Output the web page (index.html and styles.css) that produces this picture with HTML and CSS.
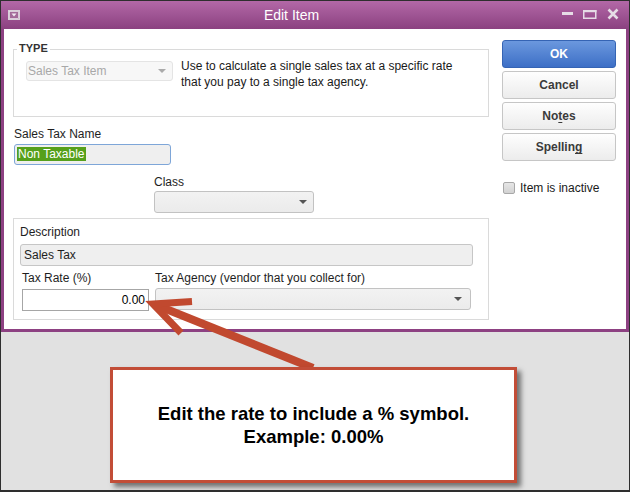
FILE: index.html
```html
<!DOCTYPE html>
<html>
<head>
<meta charset="utf-8">
<link rel="stylesheet" href="styles.css">
</head>
<body>
<div class="screen">
  <div class="window">
    <div class="titlebar">
      <div class="tb-left">
        <svg class="sysicon" width="12" height="10" viewBox="0 0 12 10">
          <rect x="0.5" y="0.5" width="11" height="9" fill="#a36a99" stroke="#d8d0d8"/>
          <rect x="1.5" y="1.5" width="9" height="7" fill="none" stroke="#e8e0e8" stroke-width="0.8"/>
          <polygon points="3.5,3.5 8.5,3.5 6,6.5" fill="#f2eaf2"/>
        </svg>
      </div>
      <div class="tb-title">Edit Item</div>
      <div class="tb-controls">
        <svg width="74" height="28" viewBox="0 0 74 28">
          <rect x="7" y="11" width="11" height="3" fill="#e6dce6"/>
          <rect x="28.75" y="9.75" width="12" height="7.5" fill="none" stroke="#e6dce6" stroke-width="1.5"/>
          <rect x="28" y="9" width="13.5" height="2.2" fill="#e6dce6"/>
          <path d="M53.5 8.5 L62.5 17.5 M62.5 8.5 L53.5 17.5" stroke="#e6dce6" stroke-width="2.6"/>
        </svg>
      </div>
    </div>
    <div class="body">
      <div class="main">
        <div class="group type-group">
          <div class="legend">TYPE</div>
          <div class="type-row">
            <div class="select type-select"><span>Sales Tax Item</span><span class="caret caret-light"></span></div>
            <p class="type-desc">Use to calculate a single sales tax at a specific rate<br>that you pay to a single tax agency.</p>
          </div>
        </div>
        <div class="label name-label">Sales Tax Name</div>
        <div class="name-input"><span class="sel">Non Taxable</span></div>
        <div class="class-field">
          <div class="label">Class</div>
          <div class="select class-select"><span></span><span class="caret"></span></div>
        </div>
        <div class="group detail-group">
          <div class="label">Description</div>
          <div class="desc-input">Sales Tax</div>
          <div class="rate-row">
            <div class="rate-col">
              <div class="label">Tax Rate (%)</div>
              <div class="rate-input">0.00</div>
            </div>
            <div class="agency-col">
              <div class="label">Tax Agency (vendor that you collect for)</div>
              <div class="select agency-select"><span></span><span class="caret"></span></div>
            </div>
          </div>
        </div>
      </div>
      <div class="side">
        <div class="btn btn-ok">OK</div>
        <div class="btn">Cancel</div>
        <div class="btn">No<u>t</u>es</div>
        <div class="btn">Spellin<u>g</u></div>
        <div class="check"><span class="box"></span><span>Item is inactive</span></div>
      </div>
    </div>
  </div>
  <svg class="arrow" width="630" height="492" viewBox="0 0 630 492">
    <path d="M156 305 L313 368" stroke="#c1492f" stroke-width="8" fill="none"/>
    <path d="M192 301.5 L153 304 L181 333" stroke="#c1492f" stroke-width="7" fill="none" stroke-linejoin="miter" stroke-miterlimit="10"/>
  </svg>
  <div class="callout">Edit the rate to include a % symbol.<br>Example: 0.00%</div>
</div>
</body>
</html>
```
FILE: styles.css
```css
body {
  margin: 0;
  font-family: "Liberation Sans", Arial, sans-serif;
  font-size: 12px;
  color: #1e1e1e;
}

.screen {
  position: relative;
  width: 630px;
  height: 492px;
  box-sizing: border-box;
  border: 1px solid #2e2e2e;
  border-bottom-width: 2px;
  background: #e1e1e1;
  overflow: hidden;
}

.window {
  width: 628px;
}

.titlebar {
  display: flex;
  align-items: center;
  height: 28px;
  background: linear-gradient(#b368a7, #8b4180);
}

.tb-left {
  width: 27px;
  box-sizing: border-box;
  padding-left: 7px;
  display: flex;
}

.sysicon {
  display: block;
}

.tb-title {
  flex: 1;
  text-align: center;
  color: #fff;
  font-size: 14px;
}

.tb-controls {
  width: 74px;
  display: flex;
}

.tb-controls svg {
  display: block;
}

.body {
  display: flex;
  gap: 13px;
  height: 300px;
  padding: 0 10px 0 9px;
  background: #fff;
  border: 3px solid #8d4182;
  border-top: 0;
}

.main {
  flex: none;
  width: 476px;
  padding-top: 20px;
}

.group {
  border: 1px solid #dadada;
}

.legend {
  width: fit-content;
  margin: -9px 0 0 3px;
  padding: 0 2px;
  background: #fff;
  font-weight: bold;
  font-size: 11px;
  line-height: 14px;
  color: #333;
}

.type-row {
  display: flex;
  gap: 8px;
  margin-top: 3px;
  padding: 0 0 26px 12px;
}

.select {
  display: flex;
  align-items: center;
  justify-content: space-between;
  box-sizing: border-box;
  border: 1px solid #c2c2c2;
  border-radius: 3px;
  background: linear-gradient(#f2f2f2, #ebebeb);
  padding: 0 6px 0 1px;
}

.caret {
  width: 0;
  height: 0;
  border-left: 4px solid transparent;
  border-right: 4px solid transparent;
  border-top: 4px solid #555;
}

.caret-light {
  border-top-color: #aaa;
}

.type-select {
  flex: none;
  width: 147px;
  height: 20px;
  margin-top: 3px;
  background: #f7f7f7;
  border-color: #e4e4e4;
  color: #a8a8a8;
}

.type-desc {
  margin: 0;
  line-height: 16px;
  color: #1a1a1a;
}

.label {
  line-height: 16px;
  color: #1e1e1e;
}

.name-label {
  margin: 9px 0 0 1px;
}

.name-input {
  margin: 2px 0 0 1px;
  width: 157px;
  height: 21px;
  box-sizing: border-box;
  border: 1px solid #7ea6d8;
  border-radius: 3px;
  background: #efefef;
  padding: 2px 0 0 2px;
}

.sel {
  display: inline-block;
  line-height: 14px;
  padding: 0 1px;
  background: #55a01b;
  color: #fff;
}

.class-field {
  margin: 9px 0 0 141px;
  width: 160px;
}

.class-select {
  margin-top: 1px;
  height: 22px;
}

.detail-group {
  margin-top: 5px;
  padding: 5px 15px 8px 6px;
}

.desc-input {
  margin-top: 4px;
  height: 22px;
  box-sizing: border-box;
  border: 1px solid #c6c6c6;
  border-radius: 3px;
  background: #efefef;
  padding-left: 3px;
  line-height: 20px;
}

.rate-row {
  display: flex;
  gap: 6px;
  margin-top: 4px;
  padding-left: 2px;
}

.rate-col {
  width: 127px;
}

.rate-input {
  margin-top: 3px;
  height: 22px;
  box-sizing: border-box;
  border: 1px solid #a6a6a6;
  background: #fff;
  text-align: right;
  padding-right: 3px;
  line-height: 20px;
  color: #000;
}

.agency-col {
  width: 316px;
}

.agency-select {
  margin-top: 2px;
  height: 22px;
  padding-right: 8px;
}

.side {
  flex: none;
  width: 114px;
  padding-top: 11px;
  display: flex;
  flex-direction: column;
  gap: 3px;
}

.btn {
  height: 28px;
  box-sizing: border-box;
  border: 1px solid #c6c6c6;
  border-radius: 3px;
  background: linear-gradient(#fefefe, #ececec);
  font-weight: bold;
  color: #3b3b3b;
  display: flex;
  align-items: center;
  justify-content: center;
}

.btn u {
  text-decoration-skip-ink: none;
  text-underline-offset: 2px;
}

.btn-ok {
  background: linear-gradient(#6b98de, #3d6fc6);
  border-color: #3564b4;
  color: #fff;
}

.check {
  margin-top: 16px;
  padding-left: 1px;
  display: flex;
  align-items: center;
  gap: 5px;
  line-height: 16px;
  color: #1a1a1a;
}

.box {
  width: 12px;
  height: 12px;
  box-sizing: border-box;
  border: 1px solid #a8a8a8;
  border-radius: 2px;
  background: linear-gradient(#e6e6e6, #d2d2d2);
}

.arrow {
  position: absolute;
  left: -1px;
  top: -1px;
  pointer-events: none;
}

.callout {
  position: absolute;
  left: 109px;
  top: 366px;
  width: 407px;
  height: 116px;
  box-sizing: border-box;
  border: 3px solid #c24d37;
  background: #fff;
  box-shadow: 4px 4px 5px rgba(0, 0, 0, 0.5);
  display: flex;
  align-items: center;
  justify-content: center;
  text-align: center;
  font-weight: bold;
  font-size: 18.5px;
  line-height: 23px;
  color: #000;
}
```
